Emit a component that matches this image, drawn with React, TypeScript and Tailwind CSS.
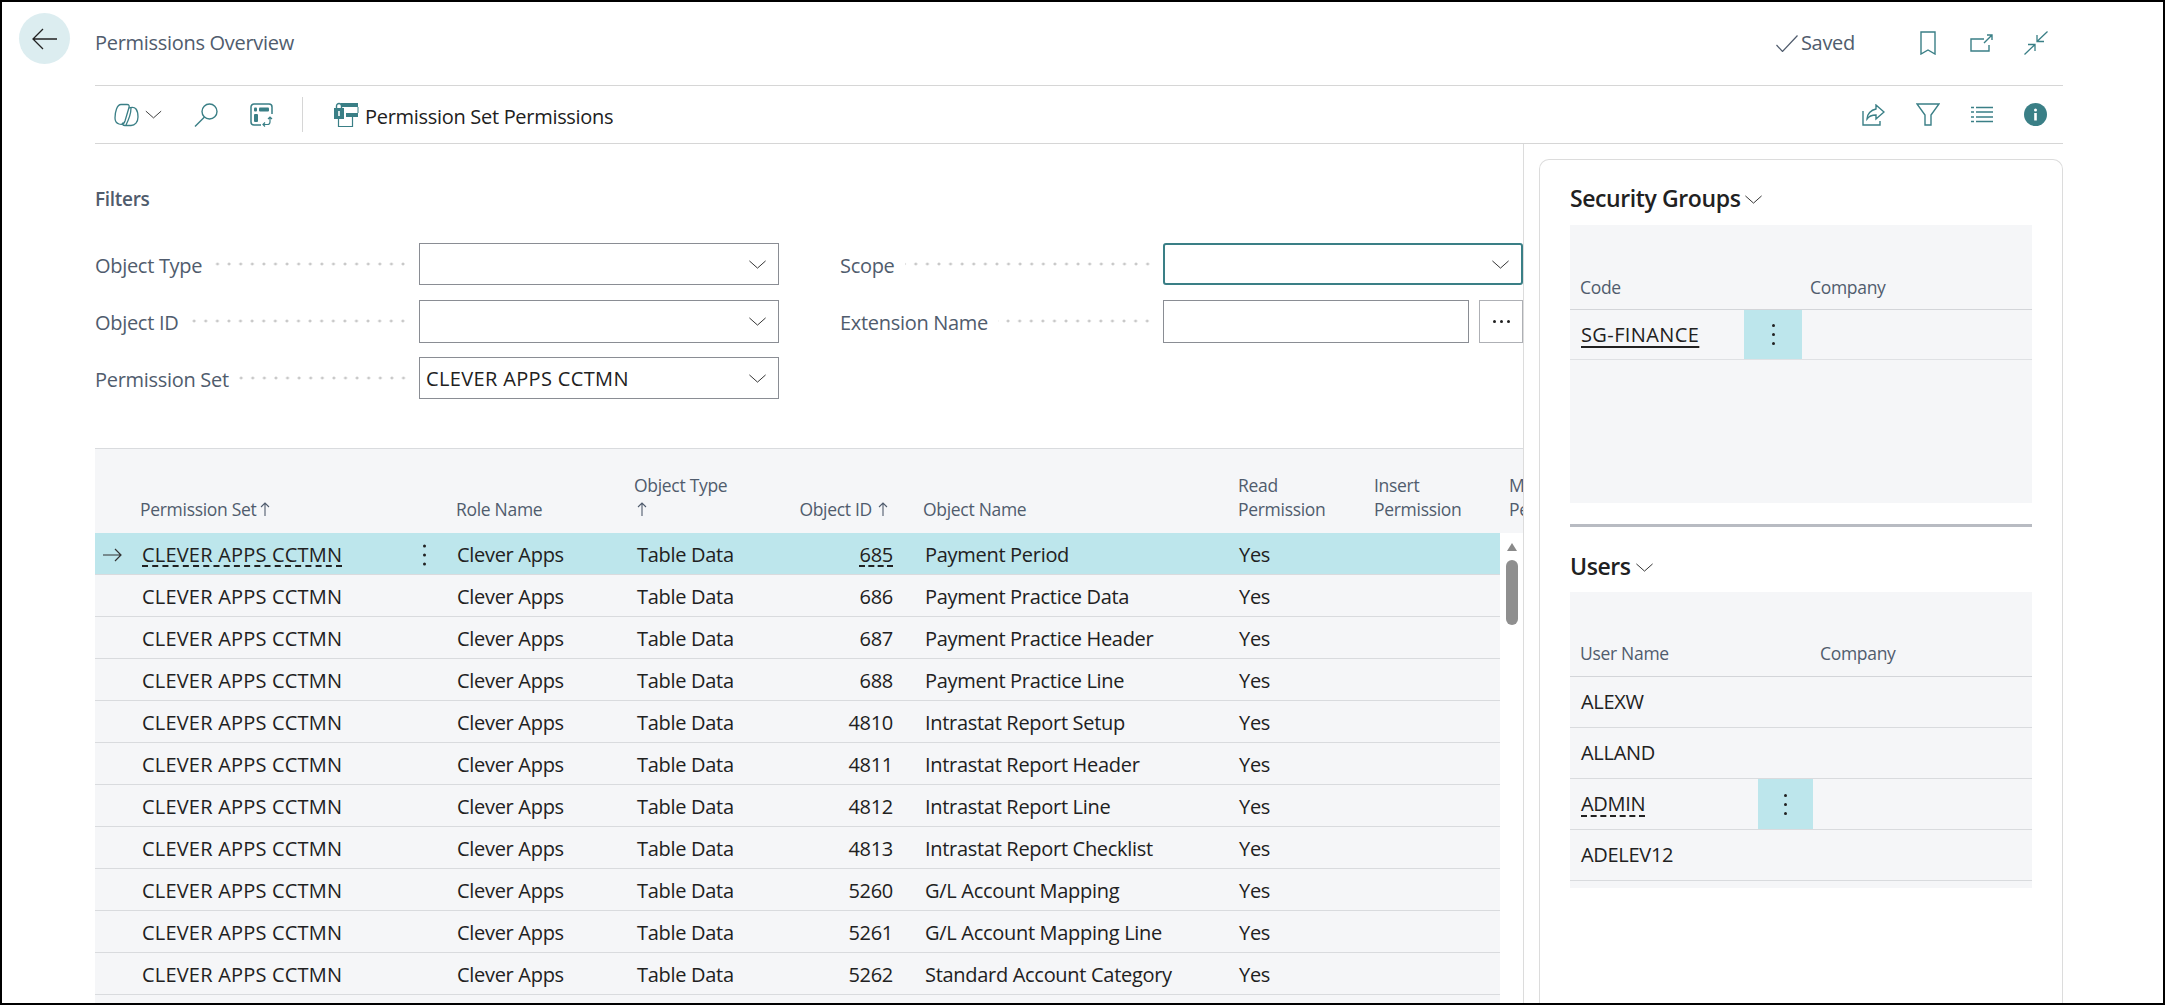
import React from "react";

const rows = [
  ["685", "Payment Period"],
  ["686", "Payment Practice Data"],
  ["687", "Payment Practice Header"],
  ["688", "Payment Practice Line"],
  ["4810", "Intrastat Report Setup"],
  ["4811", "Intrastat Report Header"],
  ["4812", "Intrastat Report Line"],
  ["4813", "Intrastat Report Checklist"],
  ["5260", "G/L Account Mapping"],
  ["5261", "G/L Account Mapping Line"],
  ["5262", "Standard Account Category"],
];

const gridCols = "grid grid-cols-[47px_315px_180px_153px_103px_346px_135px_125px_1fr]";
const dashed =
  "underline decoration-dashed decoration-[2px] underline-offset-[4px] [text-decoration-skip-ink:none]";
const teal = "#3a7f86";

function Kebab({ className }: { className?: string }) {
  return (
    <div className={`flex flex-col items-center justify-center gap-[6px] ${className}`}>
      <span className="size-[3px] rounded-full bg-[#212121]" />
      <span className="size-[3px] rounded-full bg-[#212121]" />
      <span className="size-[3px] rounded-full bg-[#212121]" />
    </div>
  );
}

function Chevron({ className }: { className?: string }) {
  return (
    <svg viewBox="0 0 20 10" className={`h-[9px] w-[19px] shrink-0 ${className}`} fill="none" stroke="#333" strokeWidth="1.1">
      <path d="M1 1l9 8 9-8" />
    </svg>
  );
}

function SortArrow({ className }: { className?: string }) {
  return (
    <svg viewBox="0 0 10 14" className={`h-[14px] w-[10px] shrink-0 ${className}`} fill="none" stroke="#505c6d" strokeWidth="1.1">
      <path d="M5 14V1M1 5l4-4 4 4" />
    </svg>
  );
}

function Dots() {
  return (
    <div className="mx-[10px] h-[4px] min-w-0 flex-1 bg-[radial-gradient(circle,#c8c8c8_1.3px,transparent_1.7px)] bg-[length:11.6px_4px] bg-right" />
  );
}

function FilterRow({ label, height, children }: { label: string; height: string; children: React.ReactNode }) {
  return (
    <div className={`flex items-center ${height}`}>
      <span className="shrink-0 pt-[3px] text-[20px] tracking-[-0.3px] text-[#505c6d]">{label}</span>
      <Dots />
      {children}
    </div>
  );
}

function SelectBox({ value, focused }: { value?: string; focused?: boolean }) {
  return (
    <div
      className={`flex h-full w-[360px] shrink-0 items-center justify-between pl-[6px] pr-[11px] ${
        focused ? "rounded-[3px] border-2 border-[#3a7f86]" : "border border-[#8a8d94]"
      }`}
    >
      <span className="pt-[2px] text-[20px] tracking-[0.35px] text-[#212121]">{value}</span>
      <Chevron />
    </div>
  );
}

function TableRow({ id, name, selected }: { id: string; name: string; selected: boolean }) {
  return (
    <div
      className={`${gridCols} h-[42px] items-center border-b border-[#d9dbde] pt-[2px] text-[20px] tracking-[-0.3px] text-[#212121] ${
        selected ? "bg-[#bde6ec]" : ""
      }`}
    >
      <div className="flex pl-[8px]">
        {selected && (
          <svg viewBox="0 0 20 14" className="h-[14px] w-5" fill="none" stroke="#333" strokeWidth="1.2">
            <path d="M0 7h18M12 1l6 6-6 6" />
          </svg>
        )}
      </div>
      <div className="relative">
        <span className={`tracking-[0.2px] ${selected ? dashed : ""}`}>CLEVER APPS CCTMN</span>
        {selected && <Kebab className="absolute left-[281px] top-1/2 -translate-y-1/2" />}
      </div>
      <div>Clever Apps</div>
      <div>Table Data</div>
      <div className="text-right">
        <span className={selected ? dashed : ""}>{id}</span>
      </div>
      <div className="pl-8">{name}</div>
      <div>Yes</div>
    </div>
  );
}

function PermissionsTable() {
  return (
    <div className="mt-[49px] flex min-h-0 flex-1 flex-col overflow-hidden border-t border-[#d9dbde]">
      <div className={`${gridCols} h-[84px] shrink-0 items-end bg-[#f5f6f8] pb-[12px] text-[17.500px] leading-[24px] tracking-[-0.3px] text-[#505c6d]`}>
        <div />
        <div className="-ml-[2px] flex items-center gap-[3px]">
          Permission Set <SortArrow />
        </div>
        <div className="-ml-px">Role Name</div>
        <div className="-ml-[3px]">
          Object Type
          <SortArrow className="mt-[5px] mb-[5px] ml-[3px]" />
        </div>
        <div className="flex items-center justify-end gap-[6px] pr-[5px]">
          Object ID <SortArrow />
        </div>
        <div className="pl-[30px]">Object Name</div>
        <div className="-ml-px">
          Read
          <br />
          Permission
        </div>
        <div>
          Insert
          <br />
          Permission
        </div>
        <div className="overflow-hidden pl-[10px]">
          <div className="w-[100px]">
            Modify
            <br />
            Permission
          </div>
        </div>
      </div>
      <div className="flex min-h-0 flex-1">
        <div className="min-w-0 flex-1 overflow-hidden bg-[#f5f6f8]">
          {rows.map((r, i) => (
            <TableRow key={r[0]} id={r[0]} name={r[1]} selected={i === 0} />
          ))}
        </div>
        <div className="flex w-[23px] shrink-0 flex-col items-center pt-[10px]">
          <div className="h-0 w-0 border-x-[5.500px] border-b-[8px] border-x-transparent border-b-[#8a8a8a]" />
          <div className="mt-[9px] h-[65px] w-[12px] rounded-full bg-[#8f8f8f]" />
        </div>
      </div>
    </div>
  );
}

function SectionTitle({ title }: { title: string }) {
  return (
    <div className="flex h-[32px] items-center text-[23px] font-semibold tracking-[-0.4px] text-[#212121]">
      {title}
      <Chevron className="ml-[4px] mt-[2px]" />
    </div>
  );
}

function SecurityGroups() {
  return (
    <div className="mt-[11px] flex h-[278px] flex-col bg-[#f5f6f8]">
      <div className="grid h-[85px] grid-cols-[174px_58px_1fr] items-end border-b border-[#d3d5d9] pb-[10px] text-[17.500px] leading-[24px] tracking-[-0.3px] text-[#505c6d]">
        <div className="pl-[10px]">Code</div>
        <div />
        <div className="pl-2">Company</div>
      </div>
      <div className="grid h-[50px] grid-cols-[174px_58px_1fr] border-b border-[#dfe1e4] text-[20px] text-[#212121]">
        <div className="flex items-center pl-[11px]">
          <span className="tracking-[0.4px] underline decoration-[2px] underline-offset-[4px]">SG-FINANCE</span>
        </div>
        <Kebab className="bg-[#bde6ec]" />
      </div>
    </div>
  );
}

function Users() {
  return (
    <div className="mt-[10px] flex h-[296px] flex-col bg-[#f5f6f8]">
      <div className="grid h-[85px] shrink-0 grid-cols-[188px_55px_1fr] items-end border-b border-[#d3d5d9] pb-[11px] text-[17.500px] leading-[24px] tracking-[-0.3px] text-[#505c6d]">
        <div className="pl-[10px]">User Name</div>
        <div />
        <div className="pl-[7px]">Company</div>
      </div>
      {["ALEXW", "ALLAND", "ADMIN", "ADELEV12"].map((u) => (
        <div
          key={u}
          className="grid h-[51px] shrink-0 grid-cols-[188px_55px_1fr] border-b border-[#d9dbde] text-[20px] tracking-[-0.3px] text-[#212121]"
        >
          <div className="flex items-center pl-[11px]">
            <span className={u === "ADMIN" ? dashed : ""}>{u}</span>
          </div>
          {u === "ADMIN" && <Kebab className="bg-[#bde6ec]" />}
        </div>
      ))}
    </div>
  );
}

export default function App() {
  return (
    <div className="flex h-[1005px] w-[2165px] flex-col overflow-hidden border-2 border-black bg-white font-['Open_Sans',sans-serif]">
      {/* title bar */}
      <div className="flex h-[83px] shrink-0 items-start">
        <div className="ml-[17px] mt-[11px] flex size-[51px] items-center justify-center rounded-full bg-[#dcedf0]">
          <svg viewBox="0 0 25 22" className="h-[22px] w-[25px]" fill="none" stroke="#222" strokeWidth="1.3">
            <path d="M25 11H1M11 1L1 11l10 10" />
          </svg>
        </div>
        <span className="ml-[25px] mt-[28px] text-[20px] leading-[26px] tracking-[-0.3px] text-[#505c6d]">Permissions Overview</span>
        <div className="ml-auto mr-[115px] mt-[28px] flex items-center">
          <svg viewBox="0 0 22 17" className="h-[17px] w-[22px]" fill="none" stroke="#505c6d" strokeWidth="1.2">
            <path d="M0.500 10l6 6.500L21.500 0.500" />
          </svg>
          <span className="ml-[3px] text-[20px] leading-[26px] tracking-[-0.3px] text-[#505c6d]">Saved</span>
          <svg viewBox="0 0 16 24" className="ml-[65px] h-6 w-4" fill="none" stroke={teal} strokeWidth="1.4">
            <path d="M1 1h14v22l-7-4-7 4z" />
          </svg>
          <svg viewBox="0 0 23 18" className="ml-[34px] h-[18px] w-[23px]" fill="none" stroke={teal} strokeWidth="1.4">
            <path d="M14 5H1v12h18v-6M14 9l8-8M17 1h5v5" />
          </svg>
          <svg viewBox="0 0 24 24" className="ml-[31px] size-6" fill="none" stroke={teal} strokeWidth="1.3">
            <path d="M23.500 0.500L13 10.500M13 4v6.500h7M0.500 23.500L11 13.500M11 20v-6.500H4" />
          </svg>
        </div>
      </div>

      {/* action bar */}
      <div className="ml-[93px] mr-[100px] flex h-[59px] shrink-0 items-center border-y border-[#d6d6d6]">
        <svg viewBox="0 0 25 24" className="ml-[19px] h-6 w-[25px]" fill="none" stroke={teal} strokeWidth="1.3">
          <path d="M7 1.500h6c2 0 2.500 1 2 3L11 18c-1 3-3 4-6 3-3-1-4-3-4-6 0-6 2-13.500 6-13.500z" />
          <path d="M14.500 5c3-1 6-1 7.500 1s2 5 2 8c0 5-3 8.500-7 8.500h-6c-2 0-3-1-2-3" />
          <path d="M17 5c0 3-2 11-5 17" />
        </svg>
        <Chevron className="ml-[6px] !w-[17px]" />
        <svg viewBox="0 0 24 24" className="ml-[32px] size-6" fill="none" stroke={teal} strokeWidth="1.4">
          <circle cx="15.500" cy="8.500" r="7.500" />
          <path d="M10.500 14L1 23.500" />
        </svg>
        <svg viewBox="0 0 23 24" className="ml-[32px] h-6 w-[23px]" fill="none" stroke={teal} strokeWidth="1.5">
          <path d="M11 22H4a3 3 0 0 1-3-3V4a3 3 0 0 1 3-3h15a3 3 0 0 1 3 3v7" />
          <rect x="9" y="4.500" width="10" height="4" rx="1" fill={teal} stroke="none" />
          <rect x="4" y="4.500" width="3" height="4" rx="1" fill={teal} stroke="none" />
          <rect x="4" y="11" width="4" height="8" rx="1" fill={teal} stroke="none" />
          <path d="M20 14v5c0 1.500-1 2.500-2.500 2.500H13M18 16l2-2 2 2M15 19.500l-2 2 2 2" strokeWidth="1.200" />
        </svg>
        <div className="ml-[29px] h-[35px] w-px bg-[#d6d6d6]" />
        <svg viewBox="0 0 25 25" className="ml-[31px] h-[25px] w-[25px]" fill="none">
          <path d="M7 1h17v4H7z" fill={teal} />
          <path d="M24 5v6" stroke={teal} />
          <rect x="0" y="6" width="10" height="11" fill={teal} />
          <path d="M2.500 6V4a2.500 2.500 0 0 1 5 0v2" stroke={teal} strokeWidth="1.400" />
          <path d="M5 9v5" stroke="#fff" strokeWidth="1.600" />
          <path d="M12 11h12v4H12z" fill={teal} />
          <path d="M4.500 17v7.500h14V15" stroke={teal} strokeWidth="1.200" />
        </svg>
        <span className="ml-[6px] pt-1 text-[20px] tracking-[-0.3px] text-[#212121]">Permission Set Permissions</span>
        <div className="ml-auto mr-[16px] flex items-center">
          <svg viewBox="0 0 23 22" className="h-[22px] w-[23px]" fill="none" stroke={teal} strokeWidth="1.4">
            <path d="M1 7v14h17v-4M14 1l8 7-8 7v-4c-4 0-7 1-9 4 0-5 4-9 9-10z" />
          </svg>
          <svg viewBox="0 0 24 23" className="ml-[31px] h-[23px] w-6" fill="none" stroke={teal} strokeWidth="1.4">
            <path d="M1 1h22l-8 11v10H9V12z" />
          </svg>
          <svg viewBox="0 0 22 17" className="ml-[31px] h-[17px] w-[22px]" fill="none" stroke={teal} strokeWidth="1.4">
            <path d="M0 1.500h3M5 1.500h17M0 6h3M5 6h17M0 11h3M5 11h17M0 15.500h3M5 15.500h17" />
          </svg>
          <svg viewBox="0 0 23 23" className="ml-[31px] size-[23px]">
            <circle cx="11.500" cy="11.500" r="11.500" fill={teal} />
            <rect x="10.200" y="10" width="2.600" height="7.500" fill="#fff" />
            <circle cx="11.500" cy="7" r="1.500" fill="#fff" />
          </svg>
        </div>
      </div>

      <div className="flex min-h-0 flex-1">
        {/* main content */}
        <div className="ml-[93px] flex w-[1429px] shrink-0 flex-col border-r border-[#dcdcdc]">
          <div className="mt-[42px] text-[19px] font-semibold leading-[26px] tracking-[-0.3px] text-[#505c6d]">Filters</div>
          <div className="mt-[31px] flex h-[156px] shrink-0 gap-[61px]">
            <div className="flex w-[684px] flex-col gap-[14.500px]">
              <FilterRow label="Object Type" height="h-[42px]">
                <SelectBox />
              </FilterRow>
              <FilterRow label="Object ID" height="h-[43px]">
                <SelectBox />
              </FilterRow>
              <FilterRow label="Permission Set" height="h-[42px]">
                <SelectBox value="CLEVER APPS CCTMN" />
              </FilterRow>
            </div>
            <div className="flex w-[683px] flex-col gap-[14.500px]">
              <FilterRow label="Scope" height="h-[42px]">
                <SelectBox focused />
              </FilterRow>
              <FilterRow label="Extension Name" height="h-[43px]">
                <div className="flex h-full w-[360px] shrink-0 gap-[10px]">
                  <div className="flex-1 border border-[#8a8d94]" />
                  <div className="flex w-[44px] items-center justify-center gap-[4px] border border-[#aeb0b5]">
                    <span className="size-[3px] rounded-full bg-[#212121]" />
                    <span className="size-[3px] rounded-full bg-[#212121]" />
                    <span className="size-[3px] rounded-full bg-[#212121]" />
                  </div>
                </div>
              </FilterRow>
            </div>
          </div>
          <PermissionsTable />
        </div>

        {/* side panel */}
        <div className="ml-[15px] mt-[15px] w-[524px] shrink-0 rounded-t-[10px] border-x border-t border-[#dcdcdc] px-[30px] pt-[22px]">
          <SectionTitle title="Security Groups" />
          <SecurityGroups />
          <div className="mt-[21px] h-[3px] bg-[#b8bbc2]" />
          <div className="mt-[23px]">
            <SectionTitle title="Users" />
          </div>
          <Users />
        </div>
      </div>
    </div>
  );
}
